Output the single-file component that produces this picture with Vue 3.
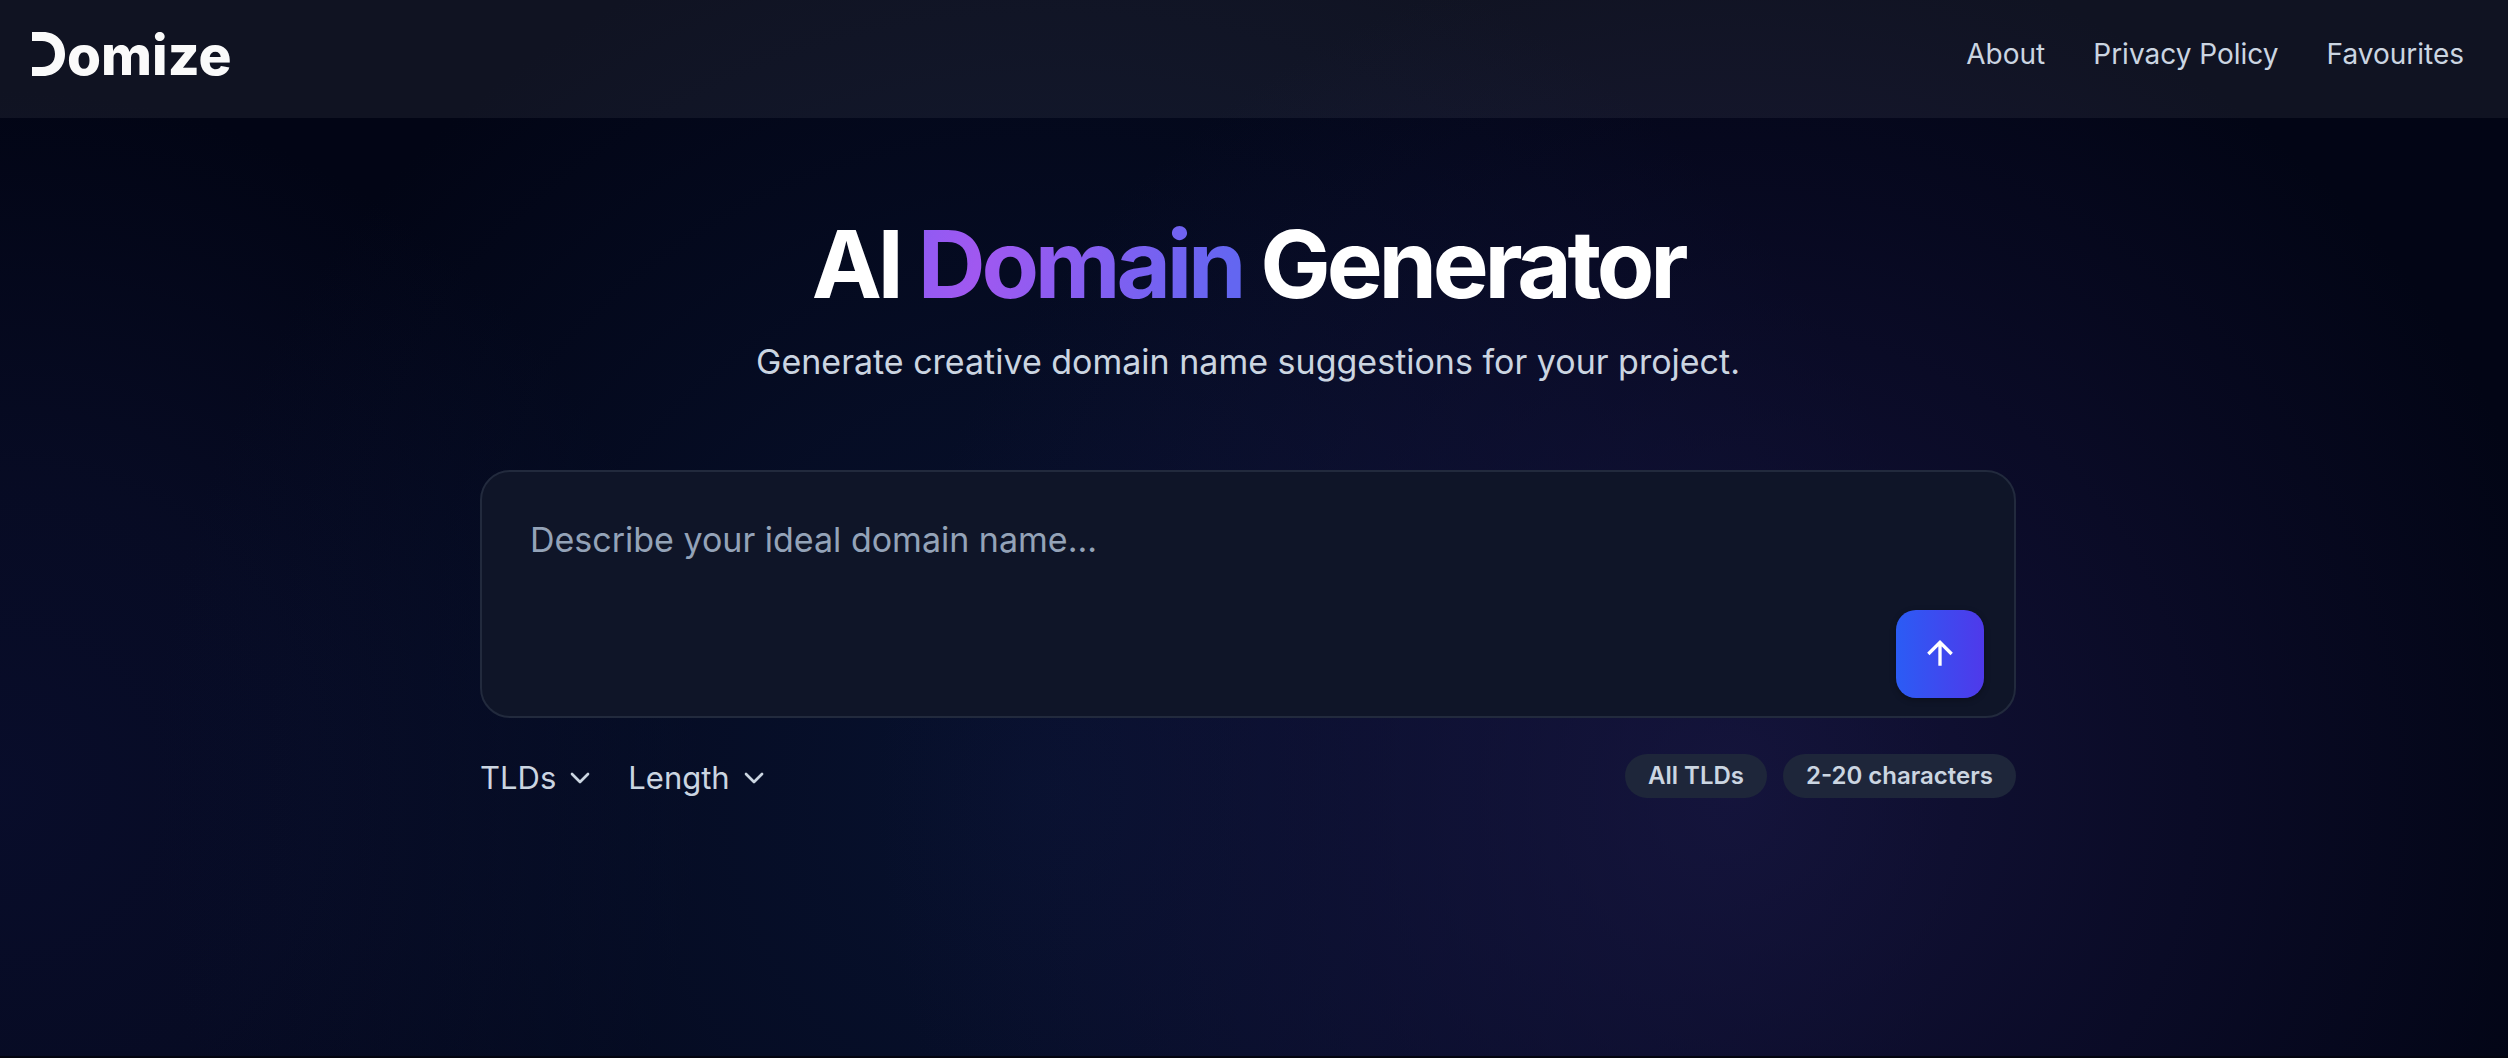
<script setup>
import { ref } from 'vue'

const links = ['About', 'Privacy Policy', 'Favourites']
const filters = ['TLDs', 'Length']
const chips = ['All TLDs', '2-20 characters']
const prompt = ref('')
</script>

<template>
  <div class="page">
    <header class="header">
      <a class="logo" href="#" aria-label="Domize">
        <svg class="logo-mark" viewBox="0 0 33 44" aria-hidden="true">
          <path d="M0 0H11C24 0 33 9 33 22S24 44 11 44H0V35H10C18 35 23 30 23 22S18 9 10 9H0Z" />
        </svg>
        <span class="logo-text">omize</span>
      </a>
      <nav class="nav">
        <a v-for="link in links" :key="link" href="#">{{ link }}</a>
      </nav>
    </header>

    <main class="main">
      <h1>AI <span class="accent">Domain</span> Generator</h1>
      <p class="lead">Generate creative domain name suggestions for your project.</p>

      <form class="form" @submit.prevent>
        <div class="box">
          <textarea
            v-model="prompt"
            aria-label="Domain description"
            placeholder="Describe your ideal domain name..."
          ></textarea>
          <button class="send" type="submit" aria-label="Generate">
            <svg viewBox="0 0 24 24" aria-hidden="true">
              <path d="M12 19V5M5 12l7-7 7 7" />
            </svg>
          </button>
        </div>

        <div class="options">
          <div class="filters">
            <label v-for="filter in filters" :key="filter" class="filter">
              <select :aria-label="filter">
                <option>{{ filter }}</option>
              </select>
              <svg viewBox="0 0 24 24" aria-hidden="true"><path d="m6 9 6 6 6-6" /></svg>
            </label>
          </div>
          <div class="chips">
            <span v-for="chip in chips" :key="chip" class="chip">{{ chip }}</span>
          </div>
        </div>
      </form>
    </main>
  </div>
</template>

<style>
body {
  margin: 0;
  background: #020414;
}
</style>

<style scoped>
.page {
  box-sizing: border-box;
  min-height: 100vh;
  border-bottom: 2px solid #03040f;
  font-family: Inter, "Liberation Sans", sans-serif;
  color: #cbd5e1;
  background:
    radial-gradient(circle 34vw at 69% 75%, rgba(26, 24, 70, 0.75), rgba(22, 20, 64, 0.48) 45%, rgba(18, 16, 54, 0)),
    radial-gradient(circle 36vw at 42% 75%, rgba(10, 24, 60, 0.65), rgba(10, 22, 56, 0.46) 45%, rgba(8, 18, 50, 0)),
    radial-gradient(circle 28vw at 0 75%, rgba(12, 17, 54, 0.65), rgba(12, 17, 50, 0.5) 45%, rgba(8, 12, 44, 0)),
    #020515;
}

.header {
  box-sizing: border-box;
  display: flex;
  justify-content: space-between;
  height: 118px;
  padding: 32px 44px 0 32px;
  background: rgba(255, 255, 255, 0.06);
}

.logo {
  display: flex;
  align-items: flex-start;
  gap: 2px;
  height: 44px;
  color: #fafafa;
  text-decoration: none;
}

.logo-mark {
  width: 33px;
  height: 44px;
  fill: currentColor;
}

.logo-text {
  font-size: 55px;
  font-weight: 800;
  line-height: 46px;
}

.nav {
  display: flex;
  gap: 48px;
}

.nav a {
  color: inherit;
  font-size: 28px;
  line-height: 44px;
  text-decoration: none;
}

.main {
  max-width: 1536px;
  margin: 0 auto;
  padding: 98px 12px 64px 0;
}

h1 {
  margin: 0;
  color: #fff;
  font-size: 94px;
  font-weight: 700;
  line-height: 96px;
  letter-spacing: -0.045em;
  text-align: center;
}

.accent {
  color: transparent;
  background: linear-gradient(100deg, #8f5bf3, #a058f0 20%, #6366f1 95%);
  -webkit-background-clip: text;
  background-clip: text;
}

.lead {
  margin: 22px 0 80px;
  font-size: 34px;
  line-height: 56px;
  text-align: center;
}

.box {
  box-sizing: border-box;
  display: flex;
  align-items: flex-end;
  min-height: 248px;
  padding: 0 30px 18px 0;
  border: 2px solid #222a3d;
  border-radius: 30px;
  background: #0f1528;
}

textarea {
  box-sizing: border-box;
  flex: 1;
  align-self: stretch;
  padding: 40px 48px 0;
  border: 0;
  outline: 0;
  resize: none;
  color: #f1f5f9;
  background: none;
  font: 400 34px/56px Inter, "Liberation Sans", sans-serif;
}

textarea::placeholder {
  color: #94a3b8;
  opacity: 1;
}

.send {
  display: grid;
  place-items: center;
  width: 88px;
  height: 88px;
  padding: 0;
  border: 0;
  border-radius: 20px;
  background: linear-gradient(to right, #2b5cf5, #4f39ea);
  box-shadow: 0 2px 6px rgba(0, 0, 0, 0.3);
}

.send svg {
  width: 40px;
  height: 40px;
  fill: none;
  stroke: #fff;
  stroke-width: 2;
}

.options {
  display: flex;
  justify-content: space-between;
  margin-top: 36px;
}

.filters {
  display: flex;
  gap: 32px;
}

.filter {
  display: flex;
  align-items: center;
  gap: 8px;
  height: 48px;
}

.filter select {
  appearance: none;
  field-sizing: content;
  padding: 0;
  border: 0;
  outline: 0;
  color: #cbd5e1;
  background: none;
  font: 400 31px/48px Inter, "Liberation Sans", sans-serif;
}

.filter svg {
  width: 32px;
  height: 32px;
  fill: none;
  stroke: #cbd5e1;
  stroke-width: 2;
  stroke-linecap: round;
  stroke-linejoin: round;
  pointer-events: none;
}

.chips {
  display: flex;
  gap: 16px;
}

.chip {
  height: 44px;
  padding: 0 23px;
  border-radius: 22px;
  background: #1e263a;
  font-size: 24px;
  font-weight: 600;
  line-height: 44px;
}
</style>
